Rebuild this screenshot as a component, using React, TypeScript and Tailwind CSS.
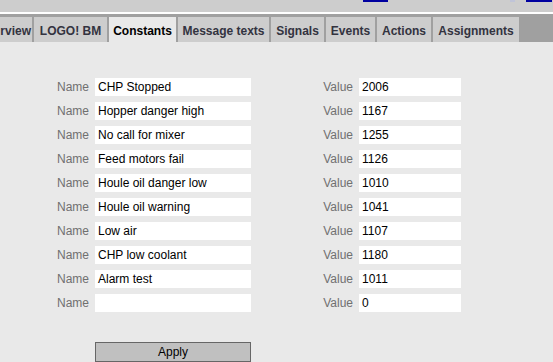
const tabs = [
  { label: "rview", w: "w-[32px]", cut: true },
  { label: "LOGO! BM", w: "w-[73px]" },
  { label: "Constants", w: "w-[67px]", active: true },
  { label: "Message texts", w: "w-[91px]" },
  { label: "Signals", w: "w-[53px]" },
  { label: "Events", w: "w-[49px]" },
  { label: "Actions", w: "w-[54px]" },
  { label: "Assignments", w: "w-[86px]" },
];

const rows = [
  { name: "CHP Stopped", value: "2006" },
  { name: "Hopper danger high", value: "1167" },
  { name: "No call for mixer", value: "1255" },
  { name: "Feed motors fail", value: "1126" },
  { name: "Houle oil danger low", value: "1010" },
  { name: "Houle oil warning", value: "1041" },
  { name: "Low air", value: "1107" },
  { name: "CHP low coolant", value: "1180" },
  { name: "Alarm test", value: "1011" },
  { name: "", value: "0" },
];

export default function App() {
  return (
    <div className="w-[553px] h-[362px] overflow-hidden bg-[#e9e9e9] font-['Liberation_Sans',Arial,sans-serif]">
      {/* Top strip with cut-off links */}
      <div className="h-[12px] bg-[#cdcdcd] flex items-start">
        <div className="ml-[363px] w-[25px] h-[2px] bg-[#0000a0]"></div>
        <div className="ml-[122px] w-[5px] h-[2px] bg-[#c0c4d8]"></div>
        <div className="ml-[11px] w-[26px] h-[2px] bg-[#0000a0]"></div>
      </div>
      <div className="h-[2px] bg-white"></div>

      {/* Tab bar */}
      <div className="h-[28px] bg-[#a0a0a0] pt-[3px] flex gap-[2px] overflow-hidden">
        {tabs.map((t) => (
          <div
            key={t.label}
            className={`${t.w} shrink-0 h-[25px] pt-[2px] flex items-center text-[12px] font-bold whitespace-nowrap overflow-hidden ${
              t.cut ? "justify-end pr-[1px]" : "justify-center"
            } ${t.active ? "bg-[#e9e9e9] text-black" : "bg-[#cdcdcd] text-[#333340]"}`}
          >
            {t.label}
          </div>
        ))}
      </div>

      {/* Form */}
      <div className="pt-[36px] pl-[39px] flex flex-col gap-[6px]">
        {rows.map((r, i) => (
          <div key={i} className="flex items-center h-[18px] text-[12px]">
            <div className="w-[50px] text-right text-[#707070]">Name</div>
            <div className="ml-[6px] w-[156px] h-[18px] bg-white pl-[3px] flex items-center text-black whitespace-nowrap">
              {r.name}
            </div>
            <div className="w-[102px] text-right text-[#707070]">Value</div>
            <div className="ml-[6px] w-[102px] h-[18px] bg-white pl-[3px] flex items-center text-black">
              {r.value}
            </div>
          </div>
        ))}
        <button className="mt-[24px] ml-[56px] w-[156px] h-[20px] bg-[#c0c0c0] border border-[#666666] text-[12px] text-black flex items-center justify-center">
          Apply
        </button>
      </div>
    </div>
  );
}
